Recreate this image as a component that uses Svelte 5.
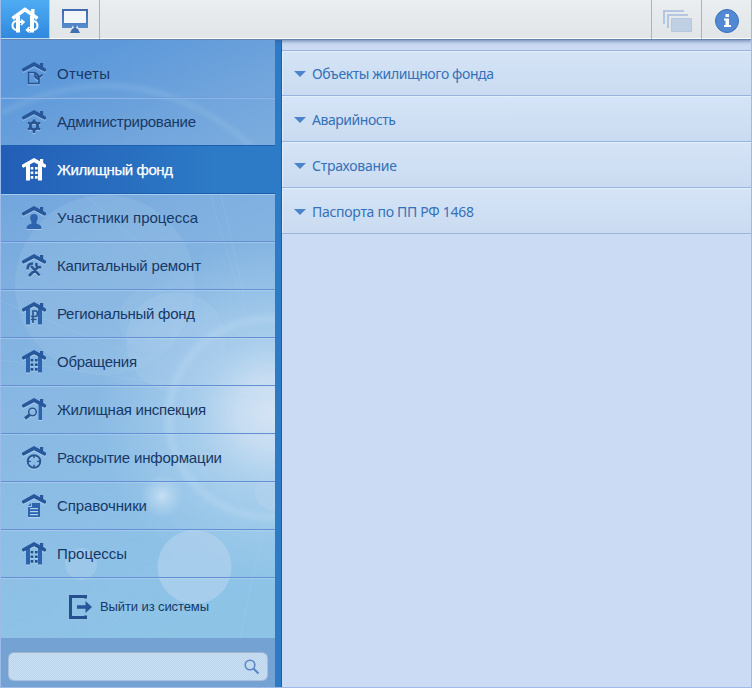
<script>
  const items = [
    { label: 'Отчеты', icon: 'report', w: 53 },
    { label: 'Администрирование', icon: 'gear', w: 139 },
    { label: 'Жилищный фонд', icon: 'building', w: 116, active: true },
    { label: 'Участники процесса', icon: 'person', w: 141 },
    { label: 'Капитальный ремонт', icon: 'tools', w: 144 },
    { label: 'Региональный фонд', icon: 'ruble', w: 138 },
    { label: 'Обращения', icon: 'building', w: 80 },
    { label: 'Жилищная инспекция', icon: 'lens', w: 149 },
    { label: 'Раскрытие информации', icon: 'target', w: 165 },
    { label: 'Справочники', icon: 'book', w: 90 },
    { label: 'Процессы', icon: 'building', w: 70 }
  ];
  const sections = ['Объекты жилищного фонда', 'Аварийность', 'Страхование', 'Паспорта по ПП РФ 1468'];
</script>

<div class="app">
  <header>
    <button class="home" aria-label="Главная">
      <svg width="50" height="39" viewBox="0 0 50 39">
        <g fill="none" stroke="#fff">
          <path d="M12.500 18.500L25 9.500L37.500 18.500" stroke-width="3.600" />
          <path d="M18 16V32.500M32 16V32.500" stroke-width="4" />
          <path d="M16 21Q12.500 22 12.500 25.500Q12.500 29.500 17 30M19 22H24M34 21Q37.500 22 37.500 25.500Q37.500 29.500 33 30M27 30H31" stroke-width="2" />
          <path d="M21 19.500L24 22L21 25M29.500 27L26.500 30L29.500 32.500" stroke-width="1.600" />
        </g>
        <path d="M31 9h3.500v8h-3.500z" fill="#fff" />
      </svg>
    </button>
    <button class="desk" aria-label="Рабочий стол">
      <svg width="49" height="39" viewBox="0 0 49 39">
        <defs><linearGradient id="mon" x2="0" y2="1"><stop stop-color="#3f69ab" /><stop offset="1" stop-color="#568dd0" /></linearGradient></defs>
        <path fill="url(#mon)" d="M12 9h26v19h-26z" />
        <path fill="#f3f6f9" d="M14 11h22v12h-22z" />
        <path fill="#e9eef4" d="M21.500 28.500L22.500 26Q25 23 27.500 26L28.500 28.500z" />
        <circle cx="25" cy="26" r="1.900" fill="#4b7ec4" />
        <path fill="#416fb4" d="M22 29L25 27.500L28 29L30 33H20z" />
      </svg>
    </button>
    <span class="space"></span>
    <button class="wins" aria-label="Окна">
      <svg width="49" height="39" viewBox="0 0 49 39">
        <path fill="#b3c7e0" d="M11 10h21v2H13v12h-2zM15 14h21v2H17v12h-2z" />
        <path fill="#bfd0e5" stroke="#b4c8e0" d="M19.500 18.500h20v13h-20z" />
      </svg>
    </button>
    <button class="info" aria-label="Информация">
      <svg width="49" height="39" viewBox="0 0 49 39">
        <circle cx="25" cy="21" r="11.500" fill="#5189d5" stroke="#3f70b5" />
        <path fill="#fff" d="M23.500 14h3.500v3h-3.500zM22 18.500h5v6.500h2v2h-7v-2h1.500v-4.500h-1.500z" />
      </svg>
    </button>
  </header>

  <main>
    <aside>
      <svg class="scene" width="274" height="598" viewBox="1 40 274 598" aria-hidden="true">
        <defs>
          <linearGradient id="sky" x1=".4" y1="0" x2=".6" y2="1">
            <stop stop-color="#5c98da" /><stop offset=".17" stop-color="#71a5dc" /><stop offset=".3" stop-color="#7daedf" />
            <stop offset=".55" stop-color="#89b9e3" /><stop offset=".8" stop-color="#8ec0e6" /><stop offset="1" stop-color="#8dc4e6" />
          </linearGradient>
          <radialGradient id="sun"><stop stop-color="#d8e6f4" stop-opacity=".95" /><stop offset=".2" stop-color="#d0e2f4" stop-opacity=".85" /><stop offset=".42" stop-color="#bddaf1" stop-opacity=".6" /><stop offset="1" stop-color="#b0d3f0" stop-opacity="0" /></radialGradient>
          <radialGradient id="flare"><stop stop-color="#d4e8f6" stop-opacity=".75" /><stop offset="1" stop-color="#c2def2" stop-opacity="0" /></radialGradient>
          <filter id="soft" x="-20%" y="-20%" width="140%" height="140%"><feGaussianBlur stdDeviation="2.500" /></filter>
        </defs>
        <rect x="1" y="40" width="274" height="598" fill="url(#sky)" />
        <circle cx="272" cy="412" r="175" fill="url(#sun)" />
        <g fill="none" stroke="#b7d8f1">
          <path d="M1 113Q135 45 252 146" stroke-width="5" opacity=".2" filter="url(#soft)" />
          <circle cx="268" cy="418" r="99" stroke-width="7" opacity=".5" filter="url(#soft)" />
          <path d="M85 195L275 365M210 195L252 335M221 195L245 300M1 301L240 400M1 360L275 400M100 638L215 510M240 638L275 470" opacity=".25" stroke-width=".7" />
        </g>
        <g fill="#b3d2ee">
          <circle cx="105" cy="285" r="90" opacity=".18" />
          <circle cx="151" cy="320" r="32" opacity=".12" />
          <circle cx="176" cy="342" r="50" opacity=".2" />
          <circle cx="194.500" cy="567" r="37" opacity=".65" />
          <circle cx="81" cy="564" r="16" opacity=".38" />
          <circle cx="274" cy="492" r="19" opacity=".6" />
        </g>
        <circle cx="162" cy="496" r="22" fill="url(#flare)" />
      </svg>
      <nav>
        {#each items as item}
          <a class:active={item.active} href="#menu">
            <svg class="ico" width="24" height="24" viewBox="0 0 24 24">
              {#if item.icon === 'building' || item.icon === 'ruble'}
                <path d="M4 8L8 5V22.500H4zM16 5L20 8V22.500H16z" />
              {/if}
              {#if item.icon === 'building'}
                <path class="dk" d="M8.700 9h2.600v2.600H8.700zM13 9h2.600v2.600H13zM8.700 13.500h2.600V16H8.700zM13 13.500h2.600V16H13zM8.700 18h2.600v2.800H8.700zM13 18h2.600v2.800H13z" />
              {:else if item.icon === 'report'}
                <path class="ln" d="M17 16V21.500H6.500V10.500H13L17 14M13 11V14.500H17M13 15L15.500 17L20.500 12.500" stroke-width="1.7" />
              {:else if item.icon === 'gear'}
                <circle class="ln" cx="12" cy="16" r="3.700" stroke-width="2.800" />
                <path class="ln" d="M12 9.500V12M12 20V23M6 12.500L8.500 14M15.500 18L18 19.500M6 19.500L8.500 18M15.500 14L18 12.500" stroke-width="2.500" />
              {:else if item.icon === 'person'}
                <path d="M12 8C15.500 8 16.500 11 15.500 14C15 15.500 14.500 16 14.500 17.500L18 19Q19.500 20 19.500 23H4.500Q4.500 20 6 19L9.500 17.500C9.500 16 9 15.500 8.500 14C7.500 11 8.500 8 12 8z" />
              {:else if item.icon === 'tools'}
                <path class="ln" d="M7 22L16 13M9 12L17.500 21.500M11 9.500Q5.500 9.500 5.500 15.500M14.500 9Q13.500 14.500 19 13" stroke-width="2.600" />
              {:else if item.icon === 'ruble'}
                <path class="ln" d="M11 21V9H13.500Q15.500 9 15.500 11.700Q15.500 14.500 13.500 14.500H9M9 17.500H14.500" stroke-width="1.700" />
              {:else if item.icon === 'lens'}
                <path d="M16.500 5L20 8V22H16.500z" />
                <circle class="ln" cx="10.500" cy="14" r="3.800" stroke-width="1.500" />
                <path class="ln" d="M7.500 17L3 20.500" stroke-width="3" />
              {:else if item.icon === 'target'}
                <circle class="ln" cx="12" cy="15.500" r="6.300" stroke-width="1.900" />
                <path class="ln" d="M12 9V12.300M12 18.700V22M5.500 15.500H8.800M15.200 15.500H18.500" stroke-width="1.500" />
              {:else if item.icon === 'book'}
                <path fill-rule="evenodd" d="M10 9H18V23H6V13H10zM8 14V15.200H16V14zM8 17V18.200H16V17zM8 20V21.200H16V20z" />
                <path d="M6 12L9 9V12z" />
              {/if}
              <path class="roof" d="M12 0L18 3.200V1h3.200v4L24 6.800V9L22.500 9.800L12 4.200L1.500 9.800L0 8.800V6.800z" />
            </svg>
            <svg class="cap" width="210" height="24"><text x="0" y="17" textLength={item.w}>{item.label}</text></svg>
          </a>
        {/each}
      </nav>
      <a class="exit" href="#exit">
        <svg width="24" height="24" viewBox="0 0 24 24">
          <path d="M17.500 3.500V1.500H2.500V22.500H17.500V20.500" fill="none" stroke="#254f8e" stroke-width="3" />
          <path d="M9 10.200H17.500V6L24 12L17.500 18V13.800H9z" fill="#28569a" />
        </svg>
        <svg width="120" height="20"><text x="0" y="14" textLength="109">Выйти из системы</text></svg>
      </a>
      <div class="find">
        <div class="box">
          <svg width="16" height="16" viewBox="0 0 16 16" fill="none" stroke="#5b86c6"><circle cx="6" cy="6" r="4.800" stroke-width="1.600" /><path d="M9.500 9.500L14.500 14.500" stroke-width="2" /></svg>
        </div>
      </div>
    </aside>
    <div class="rail"></div>
    <section>
      {#each sections as s, i}
        <div class="group">
          <i></i>
          <svg width="300" height="24"><text x="0" y="17" textLength={[182, 84, 85, 162][i]}>{s}</text></svg>
        </div>
      {/each}
    </section>
  </main>
</div>

<style>
  .app { width: 752px; height: 688px; display: flex; flex-direction: column; box-sizing: border-box; background: #cbdbf3; border: solid #9dbbe8; border-width: 0 1px 1px; font-family: "Liberation Sans", Arial, sans-serif; overflow: hidden; }
  header { height: 40px; display: flex; box-sizing: border-box; flex: none; margin: 0 -1px; background: linear-gradient(#ebeef1, #e1e5e7); border-bottom: 1px solid #6584ae; box-shadow: inset 0 -1px #fff, 0 1px 4px rgba(55, 90, 140, .7); position: relative; }
  button { border: 0; margin: 0; padding: 0; background: none; height: 39px; width: 50px; box-sizing: border-box; display: block; overflow: hidden; }
  button svg { display: block; }
  .home { background: linear-gradient(#4facf3, #3089de); border-right: 1px solid #b8cde0; border-bottom: 1px solid #b6ddf8; }
  .desk { border-right: 1px solid #b2b2b2; }
  .space { flex: 1; }
  .wins, .info { border-left: 1px solid #b2b2b2; width: 50px; }
  .info { width: 51px; }
  main { flex: 1; display: flex; min-height: 0; }
  aside { width: 274px; flex: none; display: flex; flex-direction: column; position: relative; }
  .scene { position: absolute; left: 0; top: 0; }
  nav { padding-top: 10px; position: relative; }
  nav a { display: flex; align-items: center; height: 48px; box-sizing: border-box; padding-left: 21px; gap: 11px; text-decoration: none; border-bottom: 1px solid #6390d5; box-shadow: 0 1px rgba(190, 218, 244, .45); }
  nav a:first-child { border-color: #6f9fdb; box-shadow: 0 1px #8db6e6; }
  nav a.active { background: linear-gradient(90deg, #235eb6, #2d7bc7 80%); border-bottom-color: #185fb0; box-shadow: 0 -1px #1d60b2, 0 1px #a6c9ec; }
  .ico { overflow: visible; fill: #2e64ae; filter: drop-shadow(0 1px 0 rgba(205, 227, 248, .55)); }
  .ico .roof { fill: #28589c; }
  .ico .ln { fill: none; stroke: #285592; }
  .ico .dk { fill: #24508d; }
  .active .ico { filter: none; fill: #fff; }
  .active .ico .roof, .active .ico .dk { fill: #fff; }
  text { font-size: 15px; fill: #173866; }
  .active text { fill: #fff; stroke: #fff; stroke-width: .25px; }
  .exit { position: relative; display: flex; height: 60px; align-items: center; padding: 0 0 2px 67px; gap: 8px; box-sizing: border-box; text-decoration: none; }
  .exit text { font-size: 13px; }
  .find { position: relative; flex: 1; background: #73a2d3; padding: 14px 7px 6px; box-sizing: border-box; }
  .box { height: 29px; border-radius: 6px; box-sizing: border-box; border: 1px solid #a8bedc; border-top-color: #9fb3cf; background: repeating-conic-gradient(#bcd7ed 0 25%, #cadef1 0 50%) 0 0 / 2px 2px; display: flex; align-items: center; justify-content: flex-end; padding-right: 7px; }
  .rail { width: 7px; flex: none; box-sizing: border-box; background: #2d7bc7; border-right: 1px solid #185fb0; }
  section { flex: 1; margin-top: 10px; border-top: 1px solid #95b5df; }
  .group { height: 46px; box-sizing: border-box; display: flex; align-items: center; padding: 2px 0 0 12px; gap: 6px; border-bottom: 1px solid #95b5df; background: linear-gradient(#d5e4f6, #cadbf1); box-shadow: inset 0 1px #e3effb, inset 1px 0 #e3effb; }
  .group:first-child { height: 45px; }
  .group i { border: 6px solid transparent; border-top-color: #4c84cc; border-bottom: 0; }
  .group text { font-family: "Noto Sans", "Open Sans", sans-serif; font-size: 14px; fill: #3471b8; }
</style>
